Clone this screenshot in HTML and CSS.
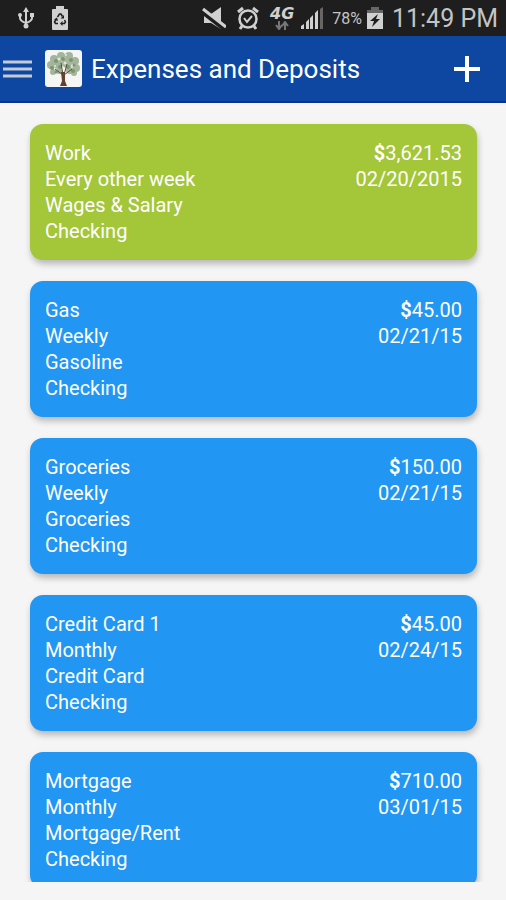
FILE: index.html
```html
<!DOCTYPE html>
<html lang="en">
<head>
    <meta charset="UTF-8">
    <meta name="viewport" content="width=device-width, initial-scale=1.0">
    <title>Expenses and Deposits</title>
    <link rel="stylesheet" href="styles.css">
</head>
<body>

<div class="status-bar">
    <div class="status-left">
        <svg class="usb" width="18" height="24" viewBox="0 0 18 24" aria-hidden="true">
            <path d="M9 4V19M3 9V12Q3 15 9 17M15 9V12Q15 15 9 17" fill="none" stroke="#d0d0d0" stroke-width="2"/>
            <path d="M9 1L12 6H6Z" fill="#d0d0d0"/>
            <circle cx="3" cy="9" r="2" fill="#d0d0d0"/>
            <rect x="13" y="7" width="4" height="4" fill="#d0d0d0"/>
            <circle cx="9" cy="20" r="2.5" fill="#d0d0d0"/>
        </svg>
        <svg width="18" height="26" viewBox="0 0 18 26" aria-hidden="true">
            <path d="M5 1H13V4H16Q17 4 17 5V24Q17 25 16 25H2Q1 25 1 24V5Q1 4 2 4H5Z" fill="#d0d0d0"/>
            <path d="M6.5 12L8.5 9H10L11.500 11.500M13.500 15L14.500 17L13.500 18.500H11M7 18.500H4.500L3.500 17L5 14.500" fill="none" stroke="#1e1e1e" stroke-width="1.500"/>
            <path d="M13 10V13.500H9.500ZM11.500 16V21L9 18.500ZM3 14.500L6 12.500L7 16Z" fill="#1e1e1e"/>
        </svg>
    </div>
    <div class="status-right">
        <svg width="24" height="24" viewBox="0 0 24 24" aria-hidden="true">
            <path d="M2 8H9L19 1V23L9 17H2Z" fill="#d0d0d0"/>
            <path d="M0 6L22 23" stroke="#1e1e1e" stroke-width="4"/>
            <path d="M1 3L24 21" stroke="#d0d0d0" stroke-width="3"/>
        </svg>
        <svg class="alarm" width="24" height="24" viewBox="0 0 24 24" aria-hidden="true">
            <circle cx="12" cy="13" r="8.5" fill="none" stroke="#d0d0d0" stroke-width="2.5"/>
            <path d="M2 6L7 2M22 6L17 2M6 20L4 23M18 20L20 23" stroke="#d0d0d0" stroke-width="3"/>
            <path d="M8 12L11 16L16 10" fill="none" stroke="#d0d0d0" stroke-width="2"/>
        </svg>
        <div class="network">
            <span class="network-type">4G</span>
            <svg width="14" height="9" viewBox="0 0 14 9" aria-hidden="true">
                <path d="M4 0V7M1 4L4 8L7 4M10 9V2M7 5L10 1L13 5" fill="none" stroke="#777" stroke-width="2"/>
            </svg>
        </div>
        <svg class="signal" width="24" height="24" viewBox="0 0 24 24" aria-hidden="true">
            <path d="M1 20L4 18V23H1ZM6 16L9 13V23H6ZM10 12L13 9V23H10ZM15 7L18 4V23H15Z" fill="#d0d0d0"/>
            <path d="M20 3L23 1V23H20Z" fill="#666"/>
        </svg>
        <span class="battery-level">78%</span>
        <svg class="battery" width="18" height="24" viewBox="0 0 18 24" aria-hidden="true">
            <path d="M5 1H13V4H17V8H1V4H5Z" fill="#666"/>
            <path d="M1 7H17V23H1Z" fill="#d0d0d0"/>
            <path d="M12 8L4 15H8L6 21L14 13H10Z" fill="#1e1e1e"/>
        </svg>
        <span class="clock">11:49 PM</span>
    </div>
</div>

<header class="app-bar">
    <button class="menu-button" aria-label="Menu">
        <svg width="29" height="18" viewBox="0 0 29 18">
            <path d="M0 2H29M0 9H29M0 16H29" stroke="#c4cad8" stroke-width="3"/>
        </svg>
    </button>
    <svg class="logo" width="37" height="37" viewBox="0 0 37 37" aria-hidden="true">
        <rect width="37" height="37" rx="3" fill="#f5f6f4"/>
        <g fill="#a3b59a">
            <circle cx="9" cy="9" r="4"/>
            <circle cx="16" cy="6" r="4"/>
            <circle cx="24" cy="6" r="4"/>
            <circle cx="30" cy="11" r="4"/>
            <circle cx="6" cy="15" r="4"/>
            <circle cx="13" cy="14" r="5"/>
            <circle cx="22" cy="13" r="5"/>
            <circle cx="31" cy="18" r="4"/>
            <circle cx="8" cy="22" r="3"/>
            <circle cx="14" cy="21" r="3"/>
            <circle cx="25" cy="20" r="4"/>
            <circle cx="29" cy="23" r="3"/>
        </g>
        <g fill="#7d9573">
            <circle cx="11" cy="11" r="2"/>
            <circle cx="18" cy="9" r="2"/>
            <circle cx="26" cy="10" r="2"/>
            <circle cx="7" cy="18" r="2"/>
            <circle cx="15" cy="17" r="2"/>
            <circle cx="23" cy="17" r="2"/>
            <circle cx="29" cy="15" r="1.5"/>
            <circle cx="28" cy="21" r="2"/>
            <circle cx="11" cy="22" r="1.5"/>
        </g>
        <g fill="#dfe6da">
            <circle cx="14" cy="9" r="1.5"/>
            <circle cx="21" cy="5" r="1"/>
            <circle cx="20" cy="13" r="1.5"/>
            <circle cx="10" cy="16" r="1"/>
            <circle cx="27" cy="17" r="1"/>
        </g>
        <path d="M18 25L10 19M18 25L16 13M19 25L22 14M19 25L27 19" fill="none" stroke="#5c4a3a"/>
        <path d="M16 22H20L20 31L22 36H15L17 31Z" fill="#63402f"/>
    </svg>
    <h1 class="title">Expenses and Deposits</h1>
    <button class="add-button" aria-label="Add">
        <svg width="28" height="28" viewBox="0 0 28 28">
            <path d="M14 1V27M1 14H27" stroke="#fff" stroke-width="4"/>
        </svg>
    </button>
</header>

<main class="list">
    <article class="card deposit">
        <div class="details">
            <div>Work</div>
            <div>Every other week</div>
            <div>Wages &amp; Salary</div>
            <div>Checking</div>
        </div>
        <div class="amount">
            <div><b>$</b>3,621.53</div>
            <div>02/20/2015</div>
        </div>
    </article>
    <article class="card">
        <div class="details">
            <div>Gas</div>
            <div>Weekly</div>
            <div>Gasoline</div>
            <div>Checking</div>
        </div>
        <div class="amount">
            <div><b>$</b>45.00</div>
            <div>02/21/15</div>
        </div>
    </article>
    <article class="card">
        <div class="details">
            <div>Groceries</div>
            <div>Weekly</div>
            <div>Groceries</div>
            <div>Checking</div>
        </div>
        <div class="amount">
            <div><b>$</b>150.00</div>
            <div>02/21/15</div>
        </div>
    </article>
    <article class="card">
        <div class="details">
            <div>Credit Card 1</div>
            <div>Monthly</div>
            <div>Credit Card</div>
            <div>Checking</div>
        </div>
        <div class="amount">
            <div><b>$</b>45.00</div>
            <div>02/24/15</div>
        </div>
    </article>
    <article class="card">
        <div class="details">
            <div>Mortgage</div>
            <div>Monthly</div>
            <div>Mortgage/Rent</div>
            <div>Checking</div>
        </div>
        <div class="amount">
            <div><b>$</b>710.00</div>
            <div>03/01/15</div>
        </div>
    </article>
</main>

</body>
</html>
```
FILE: styles.css
```css
* {
    box-sizing: border-box;
}
body {
    display: flex;
    flex-direction: column;
    height: 100vh;
    margin: 0;
    padding-bottom: 18px;
    background-color: #f5f5f5;
    font-family: Roboto, sans-serif;
}
button {
    display: flex;
    padding: 0;
    border: none;
    background: none;
    cursor: pointer;
}
.status-bar {
    display: flex;
    flex: none;
    align-items: center;
    justify-content: space-between;
    height: 36px;
    padding: 0 8px 0 17px;
    background-color: #1e1e1e;
    color: #c4c4c4;
}
.status-left {
    display: flex;
    align-items: center;
    gap: 16px;
}
.status-right {
    display: flex;
    align-items: center;
}
.alarm {
    margin-left: 10px;
}
.network {
    display: flex;
    flex-direction: column;
    align-items: center;
    width: 28px;
    margin-left: 8px;
}
.network-type {
    font: italic bold 16px/14px "DejaVu Sans", sans-serif;
    color: #d0d0d0;
}
.signal {
    margin-left: 4px;
}
.battery-level {
    margin-left: 8px;
    font-size: 16px;
}
.battery {
    margin-left: 4px;
}
.clock {
    margin-left: 8px;
    font-size: 25px;
}
.app-bar {
    display: flex;
    flex: none;
    align-items: center;
    height: 67px;
    padding: 0 25px 0 3px;
    border-bottom: 2px solid #0a2f96;
    background-color: #0d47a1;
    color: #fff;
}
.logo {
    margin-left: 13px;
}
.title {
    flex: 1;
    margin: 0 0 0 9px;
    font-size: 26px;
    font-weight: 400;
}
.list {
    display: flex;
    flex: 1;
    flex-direction: column;
    gap: 21px;
    min-height: 0;
    padding: 21px 29px 0 30px;
    overflow: hidden;
}
.card {
    display: flex;
    flex: none;
    justify-content: space-between;
    padding: 16px 15px;
    border-radius: 13px;
    background-color: #2196f3;
    box-shadow: 1px 4px 6px rgba(0, 0, 0, 0.25);
    color: #fff;
    font-size: 20px;
    line-height: 26px;
}
.deposit {
    background-color: #a4c639;
}
.amount {
    text-align: right;
}
```
